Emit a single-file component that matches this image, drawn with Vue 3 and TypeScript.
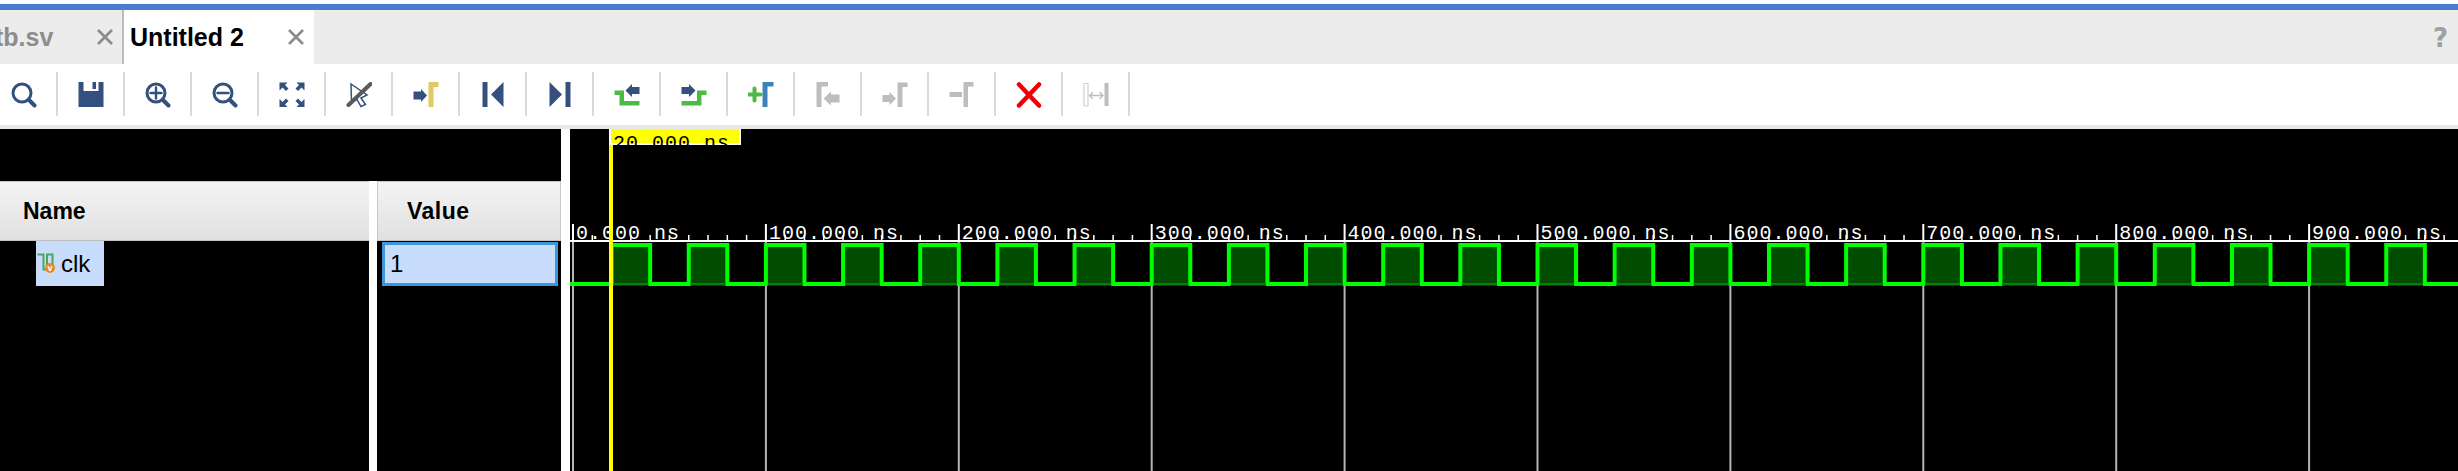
<script setup lang="ts">
interface Part {
  d: string;
  fill?: string;
  stroke?: string;
  sw?: number;
}

const BLUE = '#34507f';
const GREEN = '#4cbb44';
const GREY = '#bdbdbd';
const RING = 'M2 11a9 9 0 1 0 18 0a9 9 0 1 0-18 0';
const HANDLE = 'M18 18L23.5 23.5';

const lens = (extra: string): Part[] => [
  { d: RING, stroke: BLUE, sw: 3 },
  { d: HANDLE, stroke: BLUE, sw: 4 },
  ...(extra ? [{ d: extra, stroke: BLUE, sw: 2.4 }] : []),
];

// one outward arrow of the fit icon, mirrored into its corner
const corner = (right: boolean, bottom: boolean): Part => {
  const pts = [[0.5, 0.5], [8.5, 0.5], [6, 3], [9.5, 6.5], [7, 9], [3.5, 5.5], [0.5, 8.5]];
  const d = pts
    .map(([x, y], i) => `${i ? 'L' : 'M'}${right ? 26 - x : x} ${bottom ? 25.5 - y : y}`)
    .join('');
  return { d: d + 'Z', fill: BLUE };
};

const icons: Part[][] = [
  lens(''),
  [
    { d: 'M0.5 0H5.5V9H20.5V0H25.5V25H0.5Z', fill: BLUE },
    { d: 'M14.5 0H18V7H14.5Z', fill: BLUE },
  ],
  lens('M5.5 11H16.5M11 5.5V16.5'),
  lens('M5.5 11H16.5'),
  [corner(false, false), corner(true, false), corner(false, true), corner(true, true)],
  [
    { d: 'M5 2L21 13L15 16L19.5 22.5L15 24.5L11 17.5L5.5 20Z', fill: '#fff', stroke: BLUE, sw: 1.5 },
    { d: 'M24.5 2L2.5 23', stroke: '#5a5a5a', sw: 4 },
  ],
  [
    { d: 'M0.5 9.5H8V7L14 13.5L8 20V17.5H0.5Z', fill: BLUE },
    { d: 'M15.5 0H25.5V5H20.5V25H15.5Z', fill: '#e2c964' },
  ],
  [
    { d: 'M2.5 0H7.5V25H2.5Z', fill: BLUE },
    { d: 'M23.5 0V25L11 12.5Z', fill: BLUE },
  ],
  [
    { d: 'M2.5 0V25L15 12.5Z', fill: BLUE },
    { d: 'M18.5 0H23.5V25H18.5Z', fill: BLUE },
  ],
  [
    { d: 'M0.5 8.5H10V19H25.5V23.5H5.5V13H0.5Z', fill: GREEN },
    { d: 'M25.5 5H18V2L11.5 8.5L18 15V12H25.5Z', fill: BLUE },
  ],
  [
    { d: 'M25.5 8.5H16V19H0.5V23.5H20.5V13H25.5Z', fill: GREEN },
    { d: 'M0.5 5H8V2L14.5 8.5L8 15V12H0.5Z', fill: BLUE },
  ],
  [
    { d: 'M0.5 12.5H12.5M6.5 6.5V18.5', stroke: GREEN, sw: 4 },
    { d: 'M14.5 0H25.5V4.5H19.5V25H14.5Z', fill: '#3c82b8' },
  ],
  [
    { d: 'M1.5 0H13V4.5H6.5V25H1.5Z', fill: GREY },
    { d: 'M24.5 12.5H16V9.5L8.5 16.5L16 23.5V20.5H24.5Z', fill: GREY },
  ],
  [
    { d: 'M0.5 13H7.5V10L14 16.5L7.5 23V20H0.5Z', fill: GREY },
    { d: 'M15.5 0.5H25.5V5H20.5V25H15.5Z', fill: GREY },
  ],
  [
    { d: 'M0.5 10H13V15H0.5Z', fill: GREY },
    { d: 'M14.5 0H24.5V4.5H19V25H14.5Z', fill: GREY },
  ],
  [{ d: 'M3 2.5L23 23.5M23 2.5L3 23.5', stroke: '#f00000', sw: 4.5 }],
  [
    { d: 'M1 1.5H5V24H1Z', fill: 'none', stroke: '#cfcfcf', sw: 1.2 },
    { d: 'M21.5 1H25.5V24H21.5Z', fill: GREY },
    { d: 'M6.5 13.5H20M9.5 10.5L6.5 13.5L9.5 16.5M17 10.5L20 13.5L17 16.5', stroke: GREY, sw: 1.4 },
  ],
];

// time axis, page coordinates are used directly through the svg viewBox
const X0 = 573;
const PX_PER_NS = 1.929;
const HIGH = 245;
const LOW = 284;
const xAt = (ns: number) => X0 + ns * PX_PER_NS;

const majors = Array.from({ length: 10 }, (_, i) => ({
  x: xAt(i * 100),
  label: `${i * 100}.000 ns`,
}));
const minors = Array.from({ length: 98 }, (_, i) => xAt(i * 10)).filter((_, i) => i % 10 !== 0);

// clk rises at 20 ns and has a 40 ns period
const pulses = Array.from({ length: 25 }, (_, i) => ({
  x: xAt(20 + i * 40),
  w: 20 * PX_PER_NS,
}));
const wavePath = (() => {
  let d = `M570 ${LOW}`;
  for (const p of pulses) {
    d += `H${p.x}V${HIGH}H${p.x + p.w}V${LOW}`;
  }
  return d + 'H2460';
})();
</script>

<template>
  <div class="app">
    <div class="top-strip"></div>

    <div class="tabbar">
      <div class="tab tab-off">
        <span class="tab-label">tb.sv</span>
        <svg class="tab-close" width="16" height="16" viewBox="0 0 16 16">
          <path d="M1 1L15 15M15 1L1 15" stroke="#8a8a8a" stroke-width="2.6" />
        </svg>
      </div>
      <div class="tab tab-on">
        <span class="tab-label">Untitled 2</span>
        <svg class="tab-close" width="16" height="16" viewBox="0 0 16 16">
          <path d="M1 1L15 15M15 1L1 15" stroke="#8a8a8a" stroke-width="2.6" />
        </svg>
      </div>
      <span class="help">?</span>
    </div>

    <div class="toolbar">
      <div v-for="(icon, i) in icons" :key="i" class="tool">
        <svg width="26" height="26" viewBox="0 0 26 26">
          <path
            v-for="(p, j) in icon"
            :key="j"
            :d="p.d"
            :fill="p.fill ?? 'none'"
            :stroke="p.stroke ?? 'none'"
            :stroke-width="p.sw ?? 0"
            stroke-linecap="round"
          />
        </svg>
      </div>
    </div>

    <div class="main">
      <div class="names">
        <div class="names-top"></div>
        <div class="cols">
          <div class="col col-name">
            <div class="col-head">Name</div>
            <div class="name-row">
              <div class="name-chip">
                <svg class="sig-icon" width="20" height="21" viewBox="0 0 20 21">
                  <path d="M0.5 1.5H6.5V16.5H10V1.5H15.5V13" fill="none" stroke="#4fa35c" stroke-width="2" />
                  <circle cx="13" cy="15" r="5" fill="#ee8a1d" />
                  <text x="13" y="18" text-anchor="middle" class="sig-v">v</text>
                </svg>
                <span>clk</span>
              </div>
            </div>
          </div>
          <div class="splitter"></div>
          <div class="col col-value">
            <div class="col-head">Value</div>
            <div class="value-cell">1</div>
          </div>
        </div>
      </div>

      <div class="sash"></div>

      <svg class="wave" width="1888" height="342" viewBox="570 129 1888 342">
        <rect v-for="m in majors" :key="m.x" :x="m.x - 1" y="241" width="2" height="230" fill="#b4b4b4" />

        <rect x="570" y="240" width="1888" height="2" fill="#fff" />
        <rect v-for="m in majors" :key="'t' + m.x" :x="m.x - 1" y="224" width="2" height="16" fill="#fff" />
        <rect v-for="x in minors" :key="x" :x="x - 0.75" y="235" width="1.5" height="5" fill="#fff" />
        <text v-for="m in majors" :key="'l' + m.x" :x="m.x + 3" y="239" class="ruler-text">{{ m.label }}</text>

        <rect
          v-for="p in pulses"
          :key="'f' + p.x"
          :x="p.x"
          :y="HIGH"
          :width="p.w"
          :height="LOW - HIGH"
          fill="#004d00"
        />
        <path :d="wavePath" fill="none" stroke="#00ff00" stroke-width="4" />
        <rect
          v-for="p in pulses"
          :key="'d' + p.x"
          :x="p.x + 2"
          :y="LOW - 1"
          :width="p.w - 4"
          height="2.5"
          fill="#0a7d0a"
        />

        <rect x="609" y="129" width="4" height="342" fill="#ffff00" />
        <svg x="609" y="129" width="132" height="16">
          <rect x="0" y="0" width="132" height="16" fill="#fff" />
          <rect x="2" y="0" width="128.5" height="14" fill="#ffff00" />
          <text x="4" y="20" class="tag-text">20.000 ns</text>
        </svg>
      </svg>
    </div>
  </div>
</template>

<style scoped>
.app {
  width: 2458px;
  height: 471px;
  display: flex;
  flex-direction: column;
  overflow: hidden;
  background: #fff;
  font-family: "Liberation Sans", Arial, sans-serif;
}

.top-strip {
  height: 6px;
  margin-top: 4px;
  background: #4a7ecd;
}

.tabbar {
  height: 54px;
  display: flex;
  background: #ececec;
}

.tab {
  height: 54px;
  display: flex;
  align-items: center;
  box-sizing: border-box;
  font-weight: 700;
  font-size: 25px;
  overflow: hidden;
}

.tab-off {
  width: 124px;
  justify-content: space-between;
  padding-right: 9px;
  border-right: 2px solid #bcbcbc;
  color: #8d8d8d;
}

.tab-off .tab-label {
  margin-left: -5px;
}

.tab-on {
  width: 190px;
  justify-content: space-between;
  padding: 0 10px 0 6px;
  background: #fff;
  color: #000;
}

.tab-close {
  flex: none;
}

.help {
  margin-left: auto;
  margin-right: 10px;
  margin-top: 13px;
  font-family: "DejaVu Sans", sans-serif;
  font-weight: 700;
  font-size: 26px;
  color: #a0a0a0;
}

.toolbar {
  height: 61px;
  box-sizing: border-box;
  padding-top: 8px;
  display: flex;
  align-items: flex-start;
}

.tool {
  width: 67px;
  height: 44px;
  box-sizing: border-box;
  border-right: 2px solid #d9d9d9;
  display: flex;
  justify-content: center;
  align-items: center;
}

.tool:first-child {
  width: 58px;
  padding-right: 8px;
}

.tool svg {
  margin-top: 1px;
}

.main {
  flex: 1;
  display: flex;
  border-top: 4px solid #e8e8e8;
  background: #000;
  min-height: 0;
}

.names {
  width: 561px;
  display: flex;
  flex-direction: column;
  background: #000;
}

.names-top {
  height: 52px;
}

.cols {
  flex: 1;
  display: flex;
}

.col-name {
  width: 369px;
}

.col-value {
  width: 184px;
}

.splitter {
  width: 8px;
  background: #fff;
}

.col-head {
  height: 60px;
  box-sizing: border-box;
  display: flex;
  align-items: center;
  font-weight: 700;
  font-size: 23px;
  color: #000;
  background: linear-gradient(#f4f4f4, #e0e0e0);
  border-top: 1px solid #c8c8c8;
  border-bottom: 1px solid #c0c0c0;
}

.col-name .col-head {
  padding-left: 23px;
}

.col-value .col-head {
  padding-left: 29px;
  letter-spacing: 0.5px;
  border-left: 1px solid #c8c8c8;
  border-right: 1px solid #c8c8c8;
}

.name-row {
  height: 45px;
  padding-left: 36px;
}

.name-chip {
  width: 68px;
  height: 45px;
  display: flex;
  align-items: center;
  background: #c8ddfb;
  color: #000;
  font-size: 24px;
}

.sig-icon {
  margin-left: 1px;
  margin-right: 4px;
  flex: none;
}

.sig-v {
  font-family: "Liberation Sans", sans-serif;
  font-size: 9px;
  font-weight: 700;
  fill: #fff;
}

.value-cell {
  margin: 1px 3px 0 5px;
  height: 44px;
  box-sizing: border-box;
  padding-left: 5px;
  display: flex;
  align-items: center;
  background: #c8ddfb;
  border: 3px solid #3f95d6;
  color: #000;
  font-size: 24px;
}

.sash {
  width: 9px;
  background: #fff;
}

.wave {
  display: block;
  flex: none;
  background: #000;
}

.ruler-text,
.tag-text {
  font-family: "Liberation Mono", monospace;
  font-size: 20px;
  letter-spacing: 1px;
}

.ruler-text {
  fill: #fff;
}

.tag-text {
  fill: #000;
}
</style>

<style>
html,
body {
  margin: 0;
  background: #fff;
}
</style>
